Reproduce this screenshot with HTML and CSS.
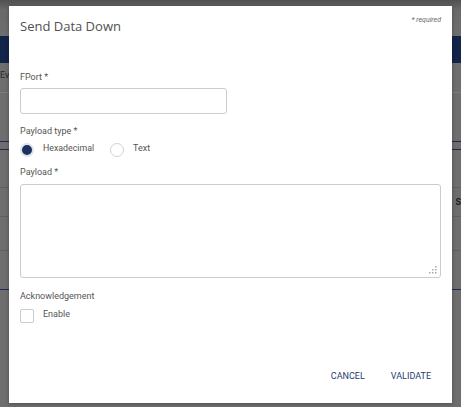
FILE: index.html
```html
<!DOCTYPE html>
<html>
<head>
<meta charset="utf-8">
<link rel="stylesheet" href="styles.css">
</head>
<body>
<div class="page">
  <div class="topbar"></div>
  <div class="navbar"></div>
  <div class="tabs"><span class="tab">Ev</span></div>
  <div class="row r1"></div>
  <div class="row r2"></div>
  <div class="row r3"></div>
  <div class="row r4"><span class="s">S</span></div>
  <div class="row r5"></div>
  <div class="row r6"></div>
</div>
<div class="dialog">
  <div class="head">
    <h1 class="title">Send Data Down</h1>
    <span class="req">* required</span>
  </div>
  <div class="field">
    <label class="lbl">FPort *</label>
    <input class="input" type="text">
  </div>
  <div class="field f-type">
    <label class="lbl">Payload type *</label>
    <div class="radios">
      <span class="radio on"></span><span class="rtext hex">Hexadecimal</span>
      <span class="radio"></span><span class="rtext">Text</span>
    </div>
  </div>
  <div class="field f-payload">
    <label class="lbl">Payload *</label>
    <div class="area">
      <svg class="grip" width="8" height="8" viewBox="0 0 8 8"><g fill="#a9a9a9"><rect x="6" y="0" width="1.5" height="1.5"/><rect x="3" y="3" width="1.5" height="1.5"/><rect x="6" y="3" width="1.5" height="1.5"/><rect x="0" y="6" width="1.5" height="1.5"/><rect x="3" y="6" width="1.5" height="1.5"/><rect x="6" y="6" width="1.5" height="1.5"/></g></svg>
    </div>
  </div>
  <div class="field f-ack">
    <label class="lbl">Acknowledgement</label>
    <div class="check-row"><span class="check"></span><span class="rtext">Enable</span></div>
  </div>
  <div class="actions">
    <button class="btn">CANCEL</button>
    <button class="btn">VALIDATE</button>
  </div>
</div>
</body>
</html>
```
FILE: styles.css
```css
* { box-sizing: border-box; }
html, body { margin: 0; padding: 0; }
body {
  width: 461px; height: 407px; overflow: hidden;
  background: #6e6e6e;
  font-family: Roboto, "Liberation Sans", sans-serif;
  position: relative;
}
.page { width: 461px; height: 407px; }
.topbar { height: 36px; background: linear-gradient(#505050 0, #6a6a6a 10px, #6e6e6e 100%); }
.navbar { height: 27px; background: #13244a; }
.tabs { height: 30px; border-bottom: 1px solid #7d7d7d; font-size: 9px; color: #2a2a2a; padding-top: 7px; }
.tab { display: inline-block; }
.row { border-bottom: 1px solid #616161; }
.r1 { height: 49px; border-bottom: 1px solid #1a2a50; }
.r2 { height: 8px; border-bottom: 1px solid #1a2a50; }
.r3 { height: 38px; }
.r4 { height: 29px; font-size: 9px; font-weight: bold; color: #1e1e1e; display: flex; justify-content: flex-end; align-items: center; }
.r5 { height: 34px; }
.r6 { height: 39px; border-bottom: 1px solid #1a2a50; }
.s { margin-right: 0; }
.dialog {
  position: absolute; left: 9px; top: 6px; width: 443px; height: 397px;
  background: #fff;
  box-shadow: 0 1px 4px rgba(0,0,0,0.3);
  padding: 0 11px;
  display: flex; flex-direction: column;
}
.head { display: flex; justify-content: space-between; align-items: flex-start; height: 65px; }
.title { margin: 11px 0 0 0; font-family: "Open Sans", sans-serif; font-weight: 400; font-size: 13px; color: #505050; }
.req { margin-top: 10px; font-size: 7px; font-style: italic; color: #666; }
.field { display: flex; flex-direction: column; }
.lbl { font-size: 9px; color: #555; height: 12px; line-height: 12px; }
.input { width: 207px; height: 26px; margin-top: 5px; border: 1px solid #c9ccd1; border-radius: 3px; background: #fff; }
.f-type { margin-top: 11px; }
.radios { display: flex; align-items: center; height: 14px; margin-top: 6px; }
.radio { width: 14px; height: 14px; border-radius: 50%; border: 1px solid #cfd3d8; background: #fff; flex: none; }
.radio.on { background: #1b3260; border: 2px solid #dfe3ea; }
.rtext { font-size: 9px; color: #555; margin-left: 9px; position: relative; top: -2px; }
.rtext.hex { margin-right: 16px; font-size: 8.8px; }
.f-payload { margin-top: 9px; }
.area { position: relative; width: 421px; height: 94px; margin-top: 6px; border: 1px solid #c9ccd1; border-radius: 3px; }
.grip { position: absolute; right: 3px; bottom: 3px; }
.f-ack { margin-top: 12px; }
.check-row { display: flex; align-items: center; margin-top: 7px; }
.check { width: 14px; height: 14px; border: 1px solid #c9ccd1; border-radius: 2px; flex: none; }
.actions { margin-top: auto; margin-bottom: 22px; display: flex; justify-content: flex-end; gap: 26px; padding-right: 10px; }
.btn { border: 0; background: none; padding: 0; font-family: Roboto, "Liberation Sans", sans-serif; font-size: 9px; color: #1f3b6f; }
```
